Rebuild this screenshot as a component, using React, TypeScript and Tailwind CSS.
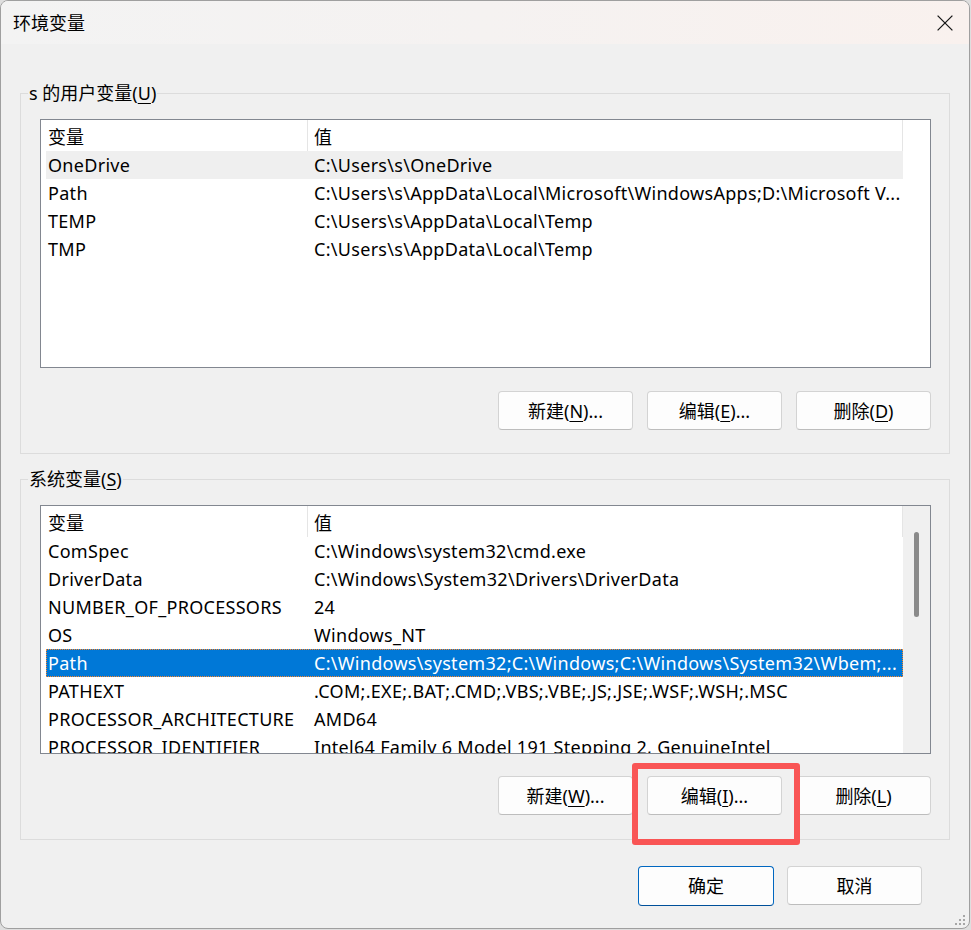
import React from "react";

const FONT = "font-['Noto_Sans','Noto_Sans_CJK_SC',sans-serif]";

function U({ children }: { children: React.ReactNode }) {
  return <span className="underline decoration-1 underline-offset-[3px]">{children}</span>;
}

function Btn({ children, primary }: { children: React.ReactNode; primary?: boolean }) {
  return (
    <button
      className={
        primary
          ? "h-[40px] w-[136px] rounded-[4px] border border-[#0067c0] border-b-[#00509a] bg-[#fdfdfd] text-[18px] leading-none text-black flex items-center justify-center"
          : "h-[39px] w-[135px] rounded-[4px] border border-[#d3d3d3] border-b-[#bdbdbd] bg-[#fdfdfd] text-[18px] leading-none text-black flex items-center justify-center"
      }
    >
      {children}
    </button>
  );
}

type Row = { name: string; value: string; state?: "sel" | "hl" };

const userRows: Row[] = [
  { name: "OneDrive", value: "C:\\Users\\s\\OneDrive", state: "hl" },
  { name: "Path", value: "C:\\Users\\s\\AppData\\Local\\Microsoft\\WindowsApps;D:\\Microsoft V..." },
  { name: "TEMP", value: "C:\\Users\\s\\AppData\\Local\\Temp" },
  { name: "TMP", value: "C:\\Users\\s\\AppData\\Local\\Temp" },
];

const sysRows: Row[] = [
  { name: "ComSpec", value: "C:\\Windows\\system32\\cmd.exe" },
  { name: "DriverData", value: "C:\\Windows\\System32\\Drivers\\DriverData" },
  { name: "NUMBER_OF_PROCESSORS", value: "24" },
  { name: "OS", value: "Windows_NT" },
  { name: "Path", value: "C:\\Windows\\system32;C:\\Windows;C:\\Windows\\System32\\Wbem;...", state: "sel" },
  { name: "PATHEXT", value: ".COM;.EXE;.BAT;.CMD;.VBS;.VBE;.JS;.JSE;.WSF;.WSH;.MSC" },
  { name: "PROCESSOR_ARCHITECTURE", value: "AMD64" },
  { name: "PROCESSOR_IDENTIFIER", value: "Intel64 Family 6 Model 191 Stepping 2, GenuineIntel" },
];

function ListView({ rows, scroll }: { rows: Row[]; scroll?: boolean }) {
  return (
    <div className="h-[249px] border border-[#828790] bg-white flex overflow-hidden">
      <div className="w-[862px] flex flex-col shrink-0">
        <div className="h-[31px] flex shrink-0">
          <div className="w-[267px] h-full pl-[7px] pt-[3px] border-r border-[#e5e5e5] flex items-center">变量</div>
          <div className="w-[595px] h-full pl-[6px] pt-[3px] border-r border-[#e5e5e5] flex items-center">值</div>
        </div>
        <div className="pl-[5px] flex flex-col">
          {rows.map((r, i) => (
            <div
              key={i}
              className={
                "h-[28px] w-[857px] shrink-0 flex items-center whitespace-nowrap overflow-hidden tracking-[0.3px] " +
                (r.state === "sel"
                  ? "bg-[#0078d7] text-white outline outline-1 outline-dotted outline-[#ff8728] -outline-offset-1"
                  : r.state === "hl"
                  ? "bg-[#efefef]"
                  : "")
              }
            >
              <div className="w-[262px] pl-[2px] shrink-0">{r.name}</div>
              <div className="pl-[6px] overflow-hidden">{r.value}</div>
            </div>
          ))}
        </div>
      </div>
      {scroll ? (
        <div className="w-[27px] h-full bg-[#f0f0f0] pt-[26px] pl-[11px] shrink-0">
          <div className="w-[5px] h-[85px] rounded-full bg-[#8a8a8a]" />
        </div>
      ) : null}
    </div>
  );
}

export default function App() {
  return (
    <div className={"w-[971px] h-[930px] bg-[#dedede] text-[18px] text-black " + FONT}>
      <div className="relative w-[970px] h-[929px] rounded-[8px] border border-[#9f9f9f] bg-[#f0f0f0] overflow-hidden flex flex-col">
        {/* Title bar */}
        <div className="h-[43px] shrink-0 flex items-center justify-between pl-[12px] pr-[16px] bg-gradient-to-r from-[#f3f3f3] via-[#f5f2f1] to-[#f9f1ee]">
          <span className="leading-none">环境变量</span>
          <svg width="16" height="16" viewBox="0 0 16 16" className="block">
            <path d="M0.6 0.6 L15.4 15.4 M15.4 0.6 L0.6 15.4" stroke="#1b1b1b" strokeWidth="1.3" fill="none" />
          </svg>
        </div>

        {/* Body */}
        <div className="flex flex-col px-[19px]">
          {/* User variables group */}
          <div className="mt-[49px] border border-[#dcdcdc] flex flex-col pb-[23px]">
            <div className="-mt-[13px] ml-[7px] px-[1px] self-start h-[24px] leading-[24px] bg-[#f0f0f0]">
              s 的用户变量(<U>U</U>)
            </div>
            <div className="mt-[14px] ml-[19px] mr-[18px]">
              <ListView rows={userRows} />
            </div>
            <div className="mt-[23px] mr-[18px] flex justify-end gap-[14px]">
              <Btn>新建(<U>N</U>)...</Btn>
              <Btn>编辑(<U>E</U>)...</Btn>
              <Btn>删除(<U>D</U>)</Btn>
            </div>
          </div>

          {/* System variables group */}
          <div className="mt-[25px] border border-[#dcdcdc] flex flex-col pb-[24px]">
            <div className="-mt-[13px] ml-[7px] px-[1px] self-start h-[24px] leading-[24px] bg-[#f0f0f0]">
              系统变量(<U>S</U>)
            </div>
            <div className="mt-[14px] ml-[19px] mr-[18px]">
              <ListView rows={sysRows} scroll />
            </div>
            <div className="mt-[22px] mr-[18px] flex justify-end gap-[14px]">
              <Btn>新建(<U>W</U>)...</Btn>
              <Btn>编辑(<U>I</U>)...</Btn>
              <Btn>删除(<U>L</U>)</Btn>
            </div>
          </div>

          {/* OK / Cancel */}
          <div className="mt-[26px] mr-[28px] flex justify-end gap-[13px]">
            <Btn primary>确定</Btn>
            <Btn>取消</Btn>
          </div>
        </div>

        {/* Resize grip */}
        <svg width="14" height="14" viewBox="0 0 14 14" className="absolute right-[2px] bottom-[1px]">
          <rect x="10" y="2" width="2" height="2" fill="#a6a6a6" />
          <rect x="6" y="6" width="2" height="2" fill="#a6a6a6" />
          <rect x="10" y="6" width="2" height="2" fill="#a6a6a6" />
          <rect x="2" y="10" width="2" height="2" fill="#a6a6a6" />
          <rect x="6" y="10" width="2" height="2" fill="#a6a6a6" />
          <rect x="10" y="10" width="2" height="2" fill="#a6a6a6" />
        </svg>

        {/* Red annotation box */}
        <div className="absolute left-[631px] top-[762px] w-[168px] h-[82px] rounded-[3px] border-[6px] border-[#f95555]" />
      </div>
    </div>
  );
}
